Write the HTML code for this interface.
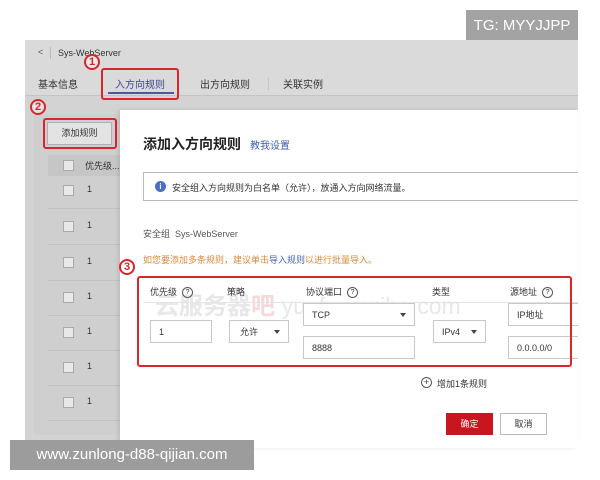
<!DOCTYPE html><html><head><meta charset="utf-8"><style>
*{margin:0;padding:0;box-sizing:border-box}
body{width:600px;height:480px;background:#fff;position:relative;overflow:hidden;font-family:"Liberation Sans","Noto Sans CJK SC",sans-serif;color:#333}
.a{position:absolute;white-space:nowrap}
.s{font-size:9px}
.circ{position:absolute;width:16px;height:16px;border:2px solid #d9262c;border-radius:50%;color:#d9262c;font-weight:bold;font-size:11px;line-height:12px;text-align:center;background:rgba(255,255,255,.4)}
.rb{position:absolute;border:2px solid #d9262c;border-radius:3px}
.in{position:absolute;border:1px solid #c8c8c8;background:#fff;font-size:9px;padding-left:8px;display:flex;align-items:center}
.tri{position:absolute;right:8px;top:50%;margin-top:-2px;border-left:3px solid transparent;border-right:3px solid transparent;border-top:4px solid #444}
.q{display:inline-block;width:11px;height:11px;border:1px solid #555;border-radius:50%;font-size:7px;line-height:9px;text-align:center;margin-left:5px;vertical-align:middle}
.cb{position:absolute;width:11px;height:11px;border:1px solid #aaa;background:#e8e8e8}
.row{position:absolute;left:48px;width:72px;height:1px;background:#c2c2c2}
</style></head><body>
<div class="a" style="left:466px;top:10px;width:112px;height:31px;background:#a3a3a3;color:#fff;font-size:15px;line-height:31px;text-align:center">TG: MYYJJPP</div>
<div class="a" style="left:25px;top:40px;width:553px;height:408px;background:#d3d3d3"></div>
<div class="a" style="left:25px;top:40px;width:553px;height:56px;background:#dadada;border-bottom:1px solid #c4c4c4"></div>
<div class="a s" style="left:38px;top:47px;color:#555">&lt;</div>
<div class="a" style="left:50px;top:47px;width:1px;height:12px;background:#bbb"></div>
<div class="a s" style="left:58px;top:48px">Sys-WebServer</div>
<div class="a" style="left:38px;top:76px;font-size:10px">基本信息</div>
<div class="a" style="left:115px;top:76px;font-size:10px;color:#3b4a8c">入方向规则</div>
<div class="a" style="left:108px;top:92px;width:66px;height:2px;background:#4b5aa0"></div>
<div class="a" style="left:200px;top:76px;font-size:10px">出方向规则</div>
<div class="a" style="left:268px;top:78px;width:1px;height:12px;background:#c4c4c4"></div>
<div class="a" style="left:283px;top:76px;font-size:10px">关联实例</div>
<div class="rb" style="left:101px;top:68px;width:78px;height:32px"></div>
<div class="circ" style="left:84px;top:54px">1</div>
<div class="a" style="left:34px;top:114px;width:86px;height:321px;background:#cfcfcf;border-radius:3px"></div>
<div class="a" style="left:47px;top:122px;width:65px;height:23px;background:#e3e3e3;border:1px solid #b0b0b0;font-size:9px;line-height:21px;text-align:center">添加规则</div>
<div class="rb" style="left:43px;top:118px;width:74px;height:31px"></div>
<div class="circ" style="left:30px;top:99px">2</div>
<div class="a" style="left:48px;top:155px;width:72px;height:21px;background:#c6c6c6"></div>
<div class="cb" style="left:63px;top:160px"></div>
<div class="a s" style="left:85px;top:159px">优先级...</div>
<div class="cb" style="left:63px;top:185px"></div><div class="a s" style="left:87px;top:184px">1</div><div class="row" style="top:208px"></div>
<div class="cb" style="left:63px;top:221px"></div><div class="a s" style="left:87px;top:220px">1</div><div class="row" style="top:244px"></div>
<div class="cb" style="left:63px;top:257px"></div><div class="a s" style="left:87px;top:256px">1</div><div class="row" style="top:280px"></div>
<div class="cb" style="left:63px;top:292px"></div><div class="a s" style="left:87px;top:291px">1</div><div class="row" style="top:315px"></div>
<div class="cb" style="left:63px;top:327px"></div><div class="a s" style="left:87px;top:326px">1</div><div class="row" style="top:350px"></div>
<div class="cb" style="left:63px;top:362px"></div><div class="a s" style="left:87px;top:361px">1</div><div class="row" style="top:385px"></div>
<div class="cb" style="left:63px;top:397px"></div><div class="a s" style="left:87px;top:396px">1</div><div class="row" style="top:420px"></div>
<div class="a" style="left:120px;top:110px;width:458px;height:338px;background:#fff;box-shadow:-2px 0 4px rgba(0,0,0,.1)"></div>
<div class="a" style="left:143px;top:134px;font-size:14px;font-weight:bold;color:#222">添加入方向规则</div>
<div class="a" style="left:250px;top:137px;font-size:10px;color:#3b5fb0">教我设置</div>
<div class="a" style="left:143px;top:172px;width:435px;height:29px;border:1px solid #bbb;border-right:none"></div>
<div class="a" style="left:155px;top:181px;width:11px;height:11px;border-radius:50%;background:#4a6fc4;color:#fff;font-size:8px;line-height:11px;text-align:center;font-weight:bold">i</div>
<div class="a s" style="left:172px;top:181px">安全组入方向规则为白名单（允许），放通入方向网络流量。</div>
<div class="a s" style="left:143px;top:227px;color:#555">安全组&nbsp; Sys-WebServer</div>
<div class="a s" style="left:143px;top:253px;color:#d98a3a">如您要添加多条规则，建议单击<span style="color:#4a63b0">导入规则</span>以进行批量导入。</div>
<div class="a" style="left:155px;top:286px;font-size:24px;font-weight:bold;color:#e8e8e8">云服务器<span style="color:#f4dada">吧</span> <span style="font-weight:normal;font-size:23px">yunfuwuqiba.com</span></div>
<div class="a s" style="left:150px;top:285px">优先级<span class="q">?</span></div>
<div class="a s" style="left:227px;top:286px;line-height:12px">策略</div>
<div class="a s" style="left:306px;top:285px">协议端口<span class="q">?</span></div>
<div class="a s" style="left:432px;top:286px;line-height:12px">类型</div>
<div class="a s" style="left:510px;top:285px">源地址<span class="q">?</span></div>
<div class="a" style="left:143px;top:302px;width:435px;height:1px;background:#e4e4e4"></div>
<div class="in" style="left:150px;top:320px;width:62px;height:23px">1</div>
<div class="in" style="left:229px;top:320px;width:60px;height:23px;padding-left:10px">允许<span class="tri"></span></div>
<div class="in" style="left:303px;top:303px;width:112px;height:23px">TCP<span class="tri"></span></div>
<div class="in" style="left:303px;top:336px;width:112px;height:23px">8888</div>
<div class="in" style="left:433px;top:320px;width:53px;height:23px">IPv4<span class="tri"></span></div>
<div class="in" style="left:508px;top:303px;width:70px;height:23px;border-right:none">IP地址</div>
<div class="in" style="left:508px;top:336px;width:70px;height:23px;border-right:none">0.0.0.0/0</div>
<div class="rb" style="left:137px;top:276px;width:435px;height:91px"></div>
<div class="circ" style="left:119px;top:259px">3</div>
<div class="a" style="left:421px;top:377px;width:11px;height:11px;border:1px solid #555;border-radius:50%;font-size:9px;line-height:8px;text-align:center">+</div>
<div class="a s" style="left:437px;top:377px">增加1条规则</div>
<div class="a" style="left:446px;top:413px;width:47px;height:22px;background:#c8161e;color:#fff;font-size:9px;line-height:22px;text-align:center">确定</div>
<div class="a" style="left:500px;top:413px;width:47px;height:22px;border:1px solid #bbb;font-size:9px;line-height:20px;text-align:center">取消</div>
<div class="a" style="left:10px;top:440px;width:244px;height:30px;background:#9c9c9c;color:#fff;font-size:15px;line-height:30px;text-align:center">www.zunlong-d88-qijian.com</div>
</body></html>
